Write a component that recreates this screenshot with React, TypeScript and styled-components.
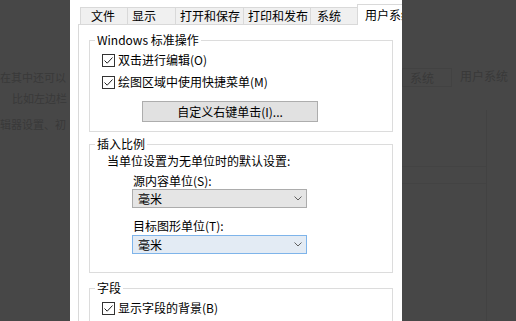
import styled, { createGlobalStyle } from 'styled-components';

const GlobalStyle = createGlobalStyle`
  html, body {
    margin: 0;
    padding: 0;
  }
  body {
    background: #474747;
    font-family: "Noto Sans CJK SC", "Noto Sans", sans-serif;
    font-size: 12px;
    color: #000;
  }
`;

const Page = styled.div`
  display: flex;
  width: 516px;
  height: 321px;
  overflow: hidden;
  background: #474747;
`;

/* dimmed page behind the dialog */
const LeftBackdrop = styled.div`
  flex: none;
  width: 70px;
  padding-top: 69px;
  white-space: nowrap;
  color: #393939;
  box-sizing: border-box;
`;

const BackdropLine = styled.div<{ indent: number; gap: number }>`
  height: 16px;
  line-height: 16px;
  margin-top: ${({ gap }) => gap}px;
  padding-left: ${({ indent }) => indent}px;
  font-size: 11px;
`;

const RightBackdrop = styled.div`
  flex: none;
  width: 114px;
  padding-top: 68px;
  white-space: nowrap;
  color: #393939;
  box-sizing: border-box;
`;

const FaintTabs = styled.div`
  display: flex;
  align-items: center;
  height: 19px;
`;

const FaintTab = styled.div<{ boxed?: boolean }>`
  height: 19px;
  line-height: 17px;
  box-sizing: border-box;
  padding: 0 7px;
  width: ${({ boxed }) => (boxed ? '50px' : 'auto')};
  border: 1px solid ${({ boxed }) => (boxed ? '#424242' : 'transparent')};
  margin-top: ${({ boxed }) => (boxed ? '0' : '-5px')};
`;

const FaintPanel = styled.div`
  width: 85px;
  height: 220px;
  margin-top: 23px;
  border-right: 1px solid #424242;
  padding-top: 56px;
  box-sizing: border-box;
`;

const FaintRule = styled.div<{ gap: number }>`
  height: 1px;
  margin-top: ${({ gap }) => gap}px;
  background: #434343;
`;

/* dialog */
const Dialog = styled.div`
  flex: none;
  width: 332px;
  height: 321px;
  background: #fff;
  padding: 4px 0 0 8px;
  box-sizing: border-box;
  overflow: hidden;
`;

const TabStrip = styled.div`
  display: flex;
  align-items: flex-end;
  height: 20px;
  margin-left: 2px;
  position: relative;
  z-index: 1;
`;

const Tab = styled.div<{ width: number; indent?: number; active?: boolean }>`
  flex: none;
  box-sizing: border-box;
  width: ${({ width }) => width}px;
  height: ${({ active }) => (active ? 21 : 17)}px;
  margin-bottom: ${({ active }) => (active ? -1 : 0)}px;
  margin-left: -1px;
  padding-left: ${({ indent }) => indent ?? 4}px;
  line-height: ${({ active }) => (active ? 19 : 15)}px;
  white-space: nowrap;
  overflow: hidden;
  background: ${({ active }) => (active ? '#fff' : '#f0f0f0')};
  border: 1px solid #d9d9d9;
  border-bottom: none;

  &:first-child {
    margin-left: 0;
  }
`;

const Panel = styled.div`
  width: 332px;
  height: 300px;
  box-sizing: border-box;
  border: 1px solid #d9d9d9;
  padding: 7px 0 0 10px;
  background: #fff;
`;

const Group = styled.fieldset<{ height: number; gap?: number }>`
  margin: ${({ gap }) => gap ?? 0}px 0 0 0;
  padding: 0;
  min-width: 0;
  width: 304px;
  height: ${({ height }) => height}px;
  box-sizing: border-box;
  border: 1px solid #dcdcdc;
`;

const Legend = styled.legend`
  margin-left: 5px;
  padding: 0 2px;
  line-height: 16px;
  height: 16px;
`;

const GroupBody = styled.div<{ top: number; left: number }>`
  display: flex;
  flex-direction: column;
  align-items: flex-start;
  padding: ${({ top, left }) => `${top}px 0 0 ${left}px`};
`;

const CheckRow = styled.label<{ gap?: number }>`
  display: flex;
  align-items: center;
  gap: 3px;
  height: 16px;
  line-height: 16px;
  margin-top: ${({ gap }) => gap ?? 0}px;
  white-space: nowrap;
`;

const CheckBox = styled.span`
  display: flex;
  align-items: center;
  justify-content: center;
  width: 13px;
  height: 13px;
  box-sizing: border-box;
  border: 1px solid #333;
  background: #fff;
`;

const PushButton = styled.div`
  width: 176px;
  height: 21px;
  margin: 11px 0 0 40px;
  box-sizing: border-box;
  border: 1px solid #adadad;
  background: #e1e1e1;
  text-align: center;
  line-height: 19px;
  white-space: nowrap;
`;

const TextLine = styled.div<{ gap?: number; indent?: number }>`
  height: 16px;
  line-height: 16px;
  margin-top: ${({ gap }) => gap ?? 0}px;
  margin-left: ${({ indent }) => indent ?? 0}px;
  white-space: nowrap;
`;

const Select = styled.div<{ focused?: boolean; gap?: number }>`
  display: flex;
  align-items: center;
  justify-content: space-between;
  width: 175px;
  height: 19px;
  margin: ${({ gap }) => gap ?? 0}px 0 0 25px;
  padding: 0 4px 0 5px;
  box-sizing: border-box;
  border: 1px solid ${({ focused }) => (focused ? '#7eb4ea' : '#acacac')};
  background: ${({ focused }) => (focused ? '#e3ebf4' : '#e5e5e5')};
  line-height: 17px;
`;

function Check() {
  return (
    <CheckBox>
      <svg width="11" height="11" viewBox="0 0 11 11">
        <path d="M1.5 5.5 L4.2 8.2 L9.5 2.5" fill="none" stroke="#222" strokeWidth="1" />
      </svg>
    </CheckBox>
  );
}

function Chevron() {
  return (
    <svg width="8" height="5" viewBox="0 0 8 5">
      <path d="M0.5 0.5 L4 4 L7.5 0.5" fill="none" stroke="#606060" strokeWidth="1" />
    </svg>
  );
}

export default function App() {
  return (
    <>
      <GlobalStyle />
      <Page>
        <LeftBackdrop>
          <BackdropLine indent={0} gap={0}>在其中还可以</BackdropLine>
          <BackdropLine indent={12} gap={5}>比如左边栏</BackdropLine>
          <BackdropLine indent={0} gap={10}>辑器设置、初</BackdropLine>
        </LeftBackdrop>

        <Dialog>
          <TabStrip>
            <Tab width={48} indent={10}>文件</Tab>
            <Tab width={49}>显示</Tab>
            <Tab width={69}>打开和保存</Tab>
            <Tab width={68}>打印和发布</Tab>
            <Tab width={48} indent={6}>系统</Tab>
            <Tab width={60} indent={7} active>用户系统设置</Tab>
          </TabStrip>

          <Panel>
            <Group height={100}>
              <Legend>Windows 标准操作</Legend>
              <GroupBody top={4} left={12}>
                <CheckRow>
                  <Check />
                  双击进行编辑(O)
                </CheckRow>
                <CheckRow gap={6}>
                  <Check />
                  绘图区域中使用快捷菜单(M)
                </CheckRow>
                <PushButton>自定义右键单击(I)...</PushButton>
              </GroupBody>
            </Group>

            <Group height={137} gap={4}>
              <Legend>插入比例</Legend>
              <GroupBody top={1} left={17}>
                <TextLine>当单位设置为无单位时的默认设置:</TextLine>
                <TextLine gap={4} indent={26}>源内容单位(S):</TextLine>
                <Select>
                  毫米
                  <Chevron />
                </Select>
                <TextLine gap={10} indent={26}>目标图形单位(T):</TextLine>
                <Select focused gap={1}>
                  毫米
                  <Chevron />
                </Select>
              </GroupBody>
            </Group>

            <Group height={60} gap={7}>
              <Legend>字段</Legend>
              <GroupBody top={4} left={12}>
                <CheckRow>
                  <Check />
                  显示字段的背景(B)
                </CheckRow>
              </GroupBody>
            </Group>
          </Panel>
        </Dialog>

        <RightBackdrop>
          <FaintTabs>
            <FaintTab boxed>系统</FaintTab>
            <FaintTab>用户系统</FaintTab>
          </FaintTabs>
          <FaintPanel>
            <FaintRule gap={0} />
            <FaintRule gap={16} />
          </FaintPanel>
        </RightBackdrop>
      </Page>
    </>
  );
}
